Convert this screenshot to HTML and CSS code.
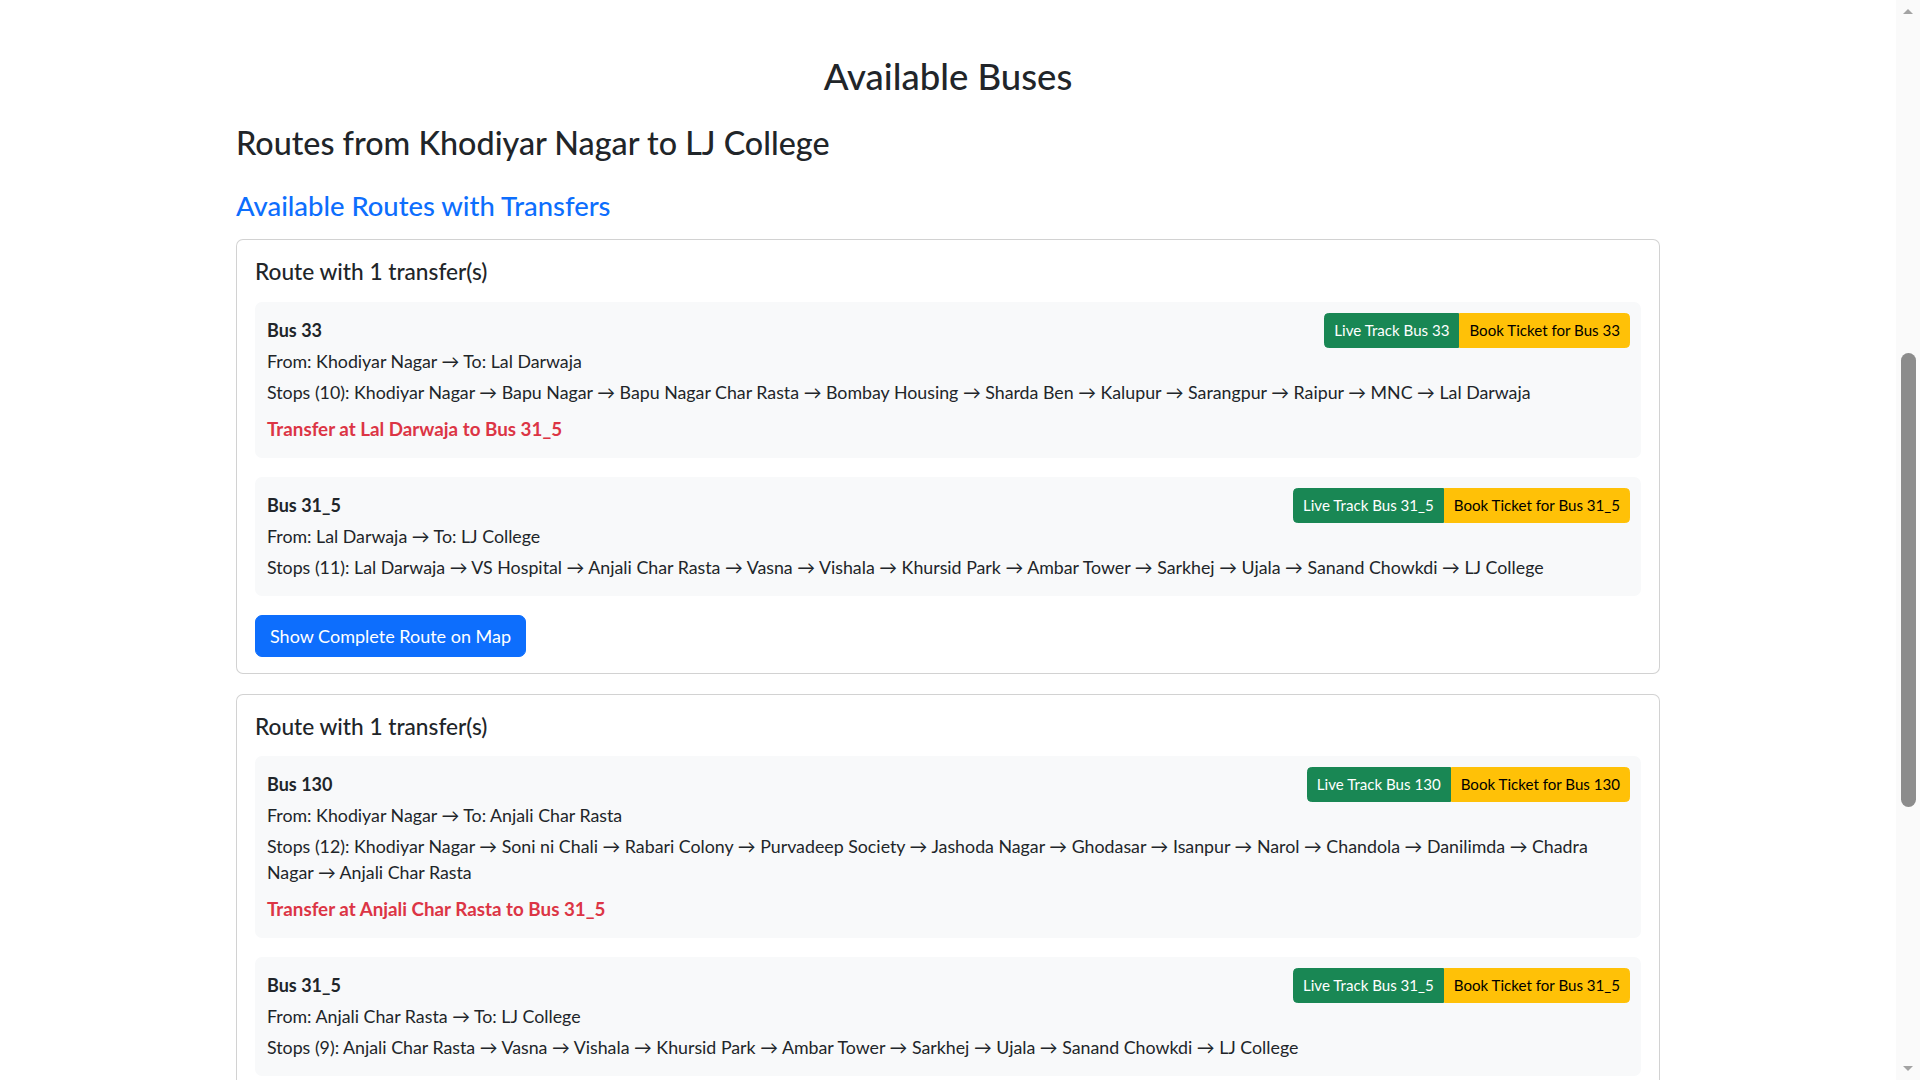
FILE: index.html
```html
<!DOCTYPE html>
<html lang="en">
<head>
<meta charset="utf-8">
<title>Available Buses</title>
<link rel="stylesheet" href="styles.css">
</head>
<body>
<div class="page">
  <main class="container">
    <h2 class="title">Available Buses</h2>
    <h3 class="subtitle">Routes from Khodiyar Nagar to LJ College</h3>
    <h4 class="section">Available Routes with Transfers</h4>

    <div class="card">
      <h5 class="card-title">Route with 1 transfer(s)</h5>

      <div class="leg">
        <div class="leg-head">
          <strong class="bus">Bus 33</strong>
          <div class="btn-group">
            <a class="btn btn-green">Live Track Bus 33</a><a class="btn btn-yellow">Book Ticket for Bus 33</a>
          </div>
        </div>
        <p class="line">From: Khodiyar Nagar → To: Lal Darwaja</p>
        <p class="line">Stops (10): Khodiyar Nagar → Bapu Nagar → Bapu Nagar Char Rasta → Bombay Housing → Sharda Ben → Kalupur → Sarangpur → Raipur → MNC → Lal Darwaja</p>
        <p class="line transfer">Transfer at Lal Darwaja to Bus 31_5</p>
      </div>

      <div class="leg">
        <div class="leg-head">
          <strong class="bus">Bus 31_5</strong>
          <div class="btn-group">
            <a class="btn btn-green">Live Track Bus 31_5</a><a class="btn btn-yellow">Book Ticket for Bus 31_5</a>
          </div>
        </div>
        <p class="line">From: Lal Darwaja → To: LJ College</p>
        <p class="line">Stops (11): Lal Darwaja → VS Hospital → Anjali Char Rasta → Vasna → Vishala → Khursid Park → Ambar Tower → Sarkhej → Ujala → Sanand Chowkdi → LJ College</p>
      </div>

      <button class="btn-map" type="button">Show Complete Route on Map</button>
    </div>

    <div class="card">
      <h5 class="card-title">Route with 1 transfer(s)</h5>

      <div class="leg">
        <div class="leg-head">
          <strong class="bus">Bus 130</strong>
          <div class="btn-group">
            <a class="btn btn-green">Live Track Bus 130</a><a class="btn btn-yellow">Book Ticket for Bus 130</a>
          </div>
        </div>
        <p class="line">From: Khodiyar Nagar → To: Anjali Char Rasta</p>
        <p class="line">Stops (12): Khodiyar Nagar → Soni ni Chali → Rabari Colony → Purvadeep Society → Jashoda Nagar → Ghodasar → Isanpur → Narol → Chandola → Danilimda → Chadra Nagar → Anjali Char Rasta</p>
        <p class="line transfer">Transfer at Anjali Char Rasta to Bus 31_5</p>
      </div>

      <div class="leg">
        <div class="leg-head">
          <strong class="bus">Bus 31_5</strong>
          <div class="btn-group">
            <a class="btn btn-green">Live Track Bus 31_5</a><a class="btn btn-yellow">Book Ticket for Bus 31_5</a>
          </div>
        </div>
        <p class="line">From: Anjali Char Rasta → To: LJ College</p>
        <p class="line">Stops (9): Anjali Char Rasta → Vasna → Vishala → Khursid Park → Ambar Tower → Sarkhej → Ujala → Sanand Chowkdi → LJ College</p>
      </div>

      <button class="btn-map" type="button">Show Complete Route on Map</button>
    </div>
  </main>
</div>

<div class="scrollbar" aria-hidden="true">
  <span class="sb-up"></span>
  <span class="sb-thumb"></span>
  <span class="sb-down"></span>
</div>
</body>
</html>
```
FILE: styles.css
```css
* { box-sizing: border-box; }

html, body {
  margin: 0;
  padding: 0;
  background: #ffffff;
}

body {
  font-family: Lato, "Open Sans", "Noto Sans", "DejaVu Sans", sans-serif;
  color: #212529;
  font-size: 17.8px;
  line-height: 26px;
}

.page {
  margin-right: 24px;
  padding-bottom: 60px;
}

.container {
  width: 1424px;
  margin: 0 auto;
  padding-top: 55px;
}

.title,
.subtitle,
.section,
.card-title {
  font-weight: 500;
  line-height: 1.2;
  margin: 0;
}

.title {
  font-size: 36.5px;
  text-align: center;
  margin-bottom: 25px;
}

.subtitle {
  font-size: 32.3px;
  margin-bottom: 27px;
}

.section {
  font-size: 27.4px;
  color: #0d6efd;
  margin-bottom: 17px;
}

.card {
  border: 1px solid rgba(0, 0, 0, 0.175);
  border-radius: 7px;
  padding: 18px 18px 16px;
  margin-bottom: 20px;
  background: #fff;
}

.card-title {
  font-size: 22.65px;
  margin-bottom: 16px;
}

.leg {
  background: #f8f9fa;
  border-radius: 7px;
  padding: 11px 11px 11px 12px;
  margin-bottom: 19px;
}

.leg-head {
  display: flex;
  align-items: center;
  justify-content: space-between;
}

.bus {
  font-weight: 700;
  font-size: 18px;
  line-height: 27px;
}

.btn-group {
  display: flex;
}

.btn {
  display: inline-block;
  font-size: 15.1px;
  line-height: 23px;
  padding: 5px 9px;
  border: 1px solid transparent;
  cursor: pointer;
  text-decoration: none;
}

.btn-green {
  background: #198754;
  border-color: #198754;
  color: #ffffff;
  border-radius: 4.5px 0 0 4.5px;
}

.btn-yellow {
  background: #ffc107;
  border-color: #ffc107;
  color: #000000;
  border-radius: 0 4.5px 4.5px 0;
}

.line {
  margin: 0 0 5px;
}

.transfer {
  margin-top: 11px;
  color: #dc3545;
  font-weight: 700;
  font-size: 18.8px;
}

.btn-map {
  font-family: inherit;
  font-size: 18px;
  line-height: 26px;
  padding: 7px 14px;
  border: 1px solid #0d6efd;
  border-radius: 7px;
  background: #0d6efd;
  color: #ffffff;
  cursor: pointer;
}

.scrollbar {
  position: fixed;
  top: 0;
  right: 0;
  width: 24px;
  height: 100vh;
  background: #fafafa;
  display: flex;
  flex-direction: column;
  align-items: center;
}

.sb-up {
  margin-top: 9px;
  border-left: 5px solid transparent;
  border-right: 5px solid transparent;
  border-bottom: 5px solid #a3a3a3;
}

.sb-thumb {
  margin-top: 339px;
  width: 15px;
  height: 454px;
  border-radius: 8px;
  background: #8c8c8c;
}

.sb-down {
  margin-top: auto;
  margin-bottom: 9px;
  border-left: 5px solid transparent;
  border-right: 5px solid transparent;
  border-top: 5px solid #a3a3a3;
}
```
